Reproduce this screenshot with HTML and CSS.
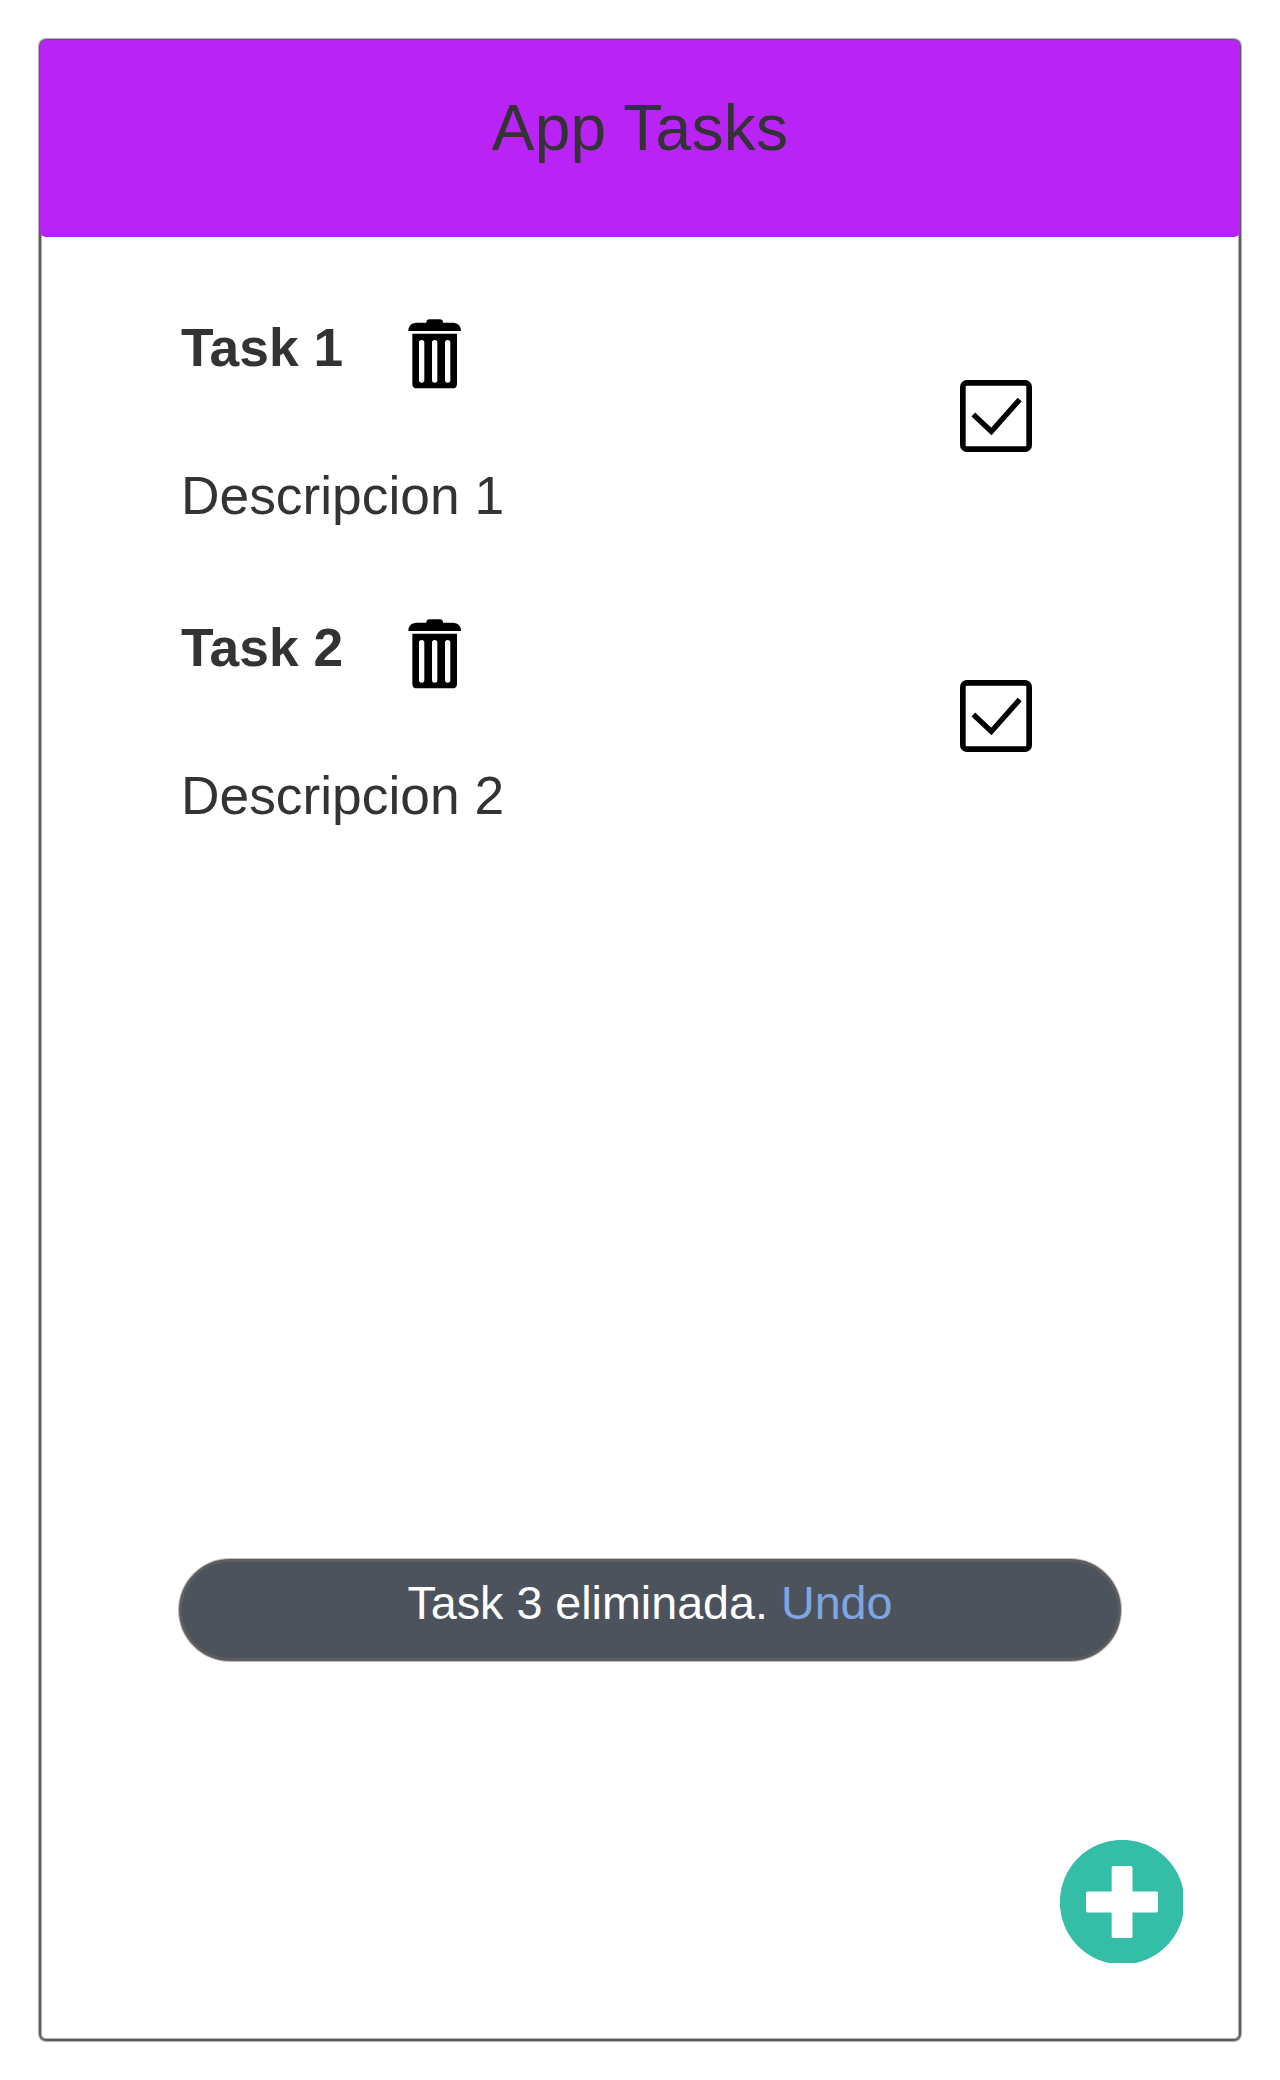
FILE: index.html
```html
<!DOCTYPE html>
<html lang="es">
<head>
<meta charset="utf-8">
<title>App Tasks</title>
<link rel="stylesheet" href="styles.css">
</head>
<body>
<svg class="symbols" aria-hidden="true">
  <symbol id="trash" viewBox="24 27 159 210">
    <path d="M25 63Q26 39 48 38H79Q79 28 89 28H119Q129 28 129 38H160Q182 39 183 63Z"/>
    <path fill-rule="evenodd" d="M37 71H171V221Q171 235 157 235H51Q37 235 37 221ZM57 98V210a8 8 0 0 0 16 0V98a8 8 0 0 0-16 0ZM96 98V210a8 8 0 0 0 16 0V98a8 8 0 0 0-16 0ZM135 98V210a8 8 0 0 0 16 0V98a8 8 0 0 0-16 0Z"/>
  </symbol>
  <symbol id="check" viewBox="30 30 216 216">
    <rect x="38.5" y="38.5" width="199" height="199" rx="12" fill="none" stroke="#000" stroke-width="17"/>
    <path d="M70 133.500L124 184.500L209 88.500" fill="none" stroke="#000" stroke-width="16"/>
  </symbol>
</svg>
<div class="app">
  <header class="header"><h1 class="app-title">App Tasks</h1></header>
  <main class="tasks">
    <article class="task">
      <div class="task-body">
        <div class="task-heading">
          <h2 class="task-title">Task 1</h2>
          <svg class="trash"><use href="#trash"/></svg>
        </div>
        <p class="task-description">Descripcion 1</p>
      </div>
      <svg class="check"><use href="#check"/></svg>
    </article>
    <article class="task">
      <div class="task-body">
        <div class="task-heading">
          <h2 class="task-title">Task 2</h2>
          <svg class="trash"><use href="#trash"/></svg>
        </div>
        <p class="task-description">Descripcion 2</p>
      </div>
      <svg class="check"><use href="#check"/></svg>
    </article>
  </main>
  <div class="snackbar">Task 3 eliminada. <span class="undo">Undo</span></div>
  <svg class="add" viewBox="30 30 369 369">
    <circle cx="216.500" cy="216.500" r="187" fill="#34bea7"/>
    <rect x="185" y="108" width="62.500" height="216" rx="5" fill="#fff"/>
    <rect x="108" y="184.500" width="216" height="63" rx="5" fill="#fff"/>
  </svg>
</div>
</body>
</html>
```
FILE: styles.css
```css
* {
  box-sizing: border-box;
}

body {
  margin: 0;
  padding: 39px;
  background: #fff;
  color: #333;
  font-family: "Liberation Sans", Arial, sans-serif;
}

h1, h2, p {
  margin: 0;
  font-weight: normal;
}

svg {
  display: block;
  flex: none;
}

.symbols {
  display: none;
}

.app {
  display: flex;
  flex-direction: column;
  height: 2002px;
  border: 2px solid #5e5e5e;
  border-radius: 7px;
  box-shadow: 0 0 0 1px rgba(94, 94, 94, 0.5), inset 0 0 0 1px rgba(94, 94, 94, 0.5);
}

.header {
  height: 197px;
  margin: -1px -1px 0;
  border-radius: 6px;
  background: #ba23f6;
}

.app-title {
  font-size: 64px;
  letter-spacing: 0.25px;
  line-height: 176px;
  text-align: center;
}

.tasks {
  height: 1322px;
  padding: 81px 207px 0 140px;
}

.task {
  display: flex;
  justify-content: space-between;
  height: 300px;
}

.task-heading {
  display: grid;
  grid-template-columns: 227px 53px;
  height: 71px;
}

.task-title,
.task-description {
  font-size: 53.33px;
  line-height: 60px;
  white-space: nowrap;
}

.task-title {
  font-weight: bold;
}

.task-description {
  margin-top: 77px;
}

.trash {
  width: 53px;
  height: 70px;
  margin-top: 1px;
}

.check {
  width: 72px;
  height: 72px;
  margin-top: 62px;
}

.snackbar {
  width: 942px;
  height: 102px;
  margin-left: 138px;
  border: 3px solid #5e5e5e;
  border-radius: 51px;
  background: #4c535d;
  box-shadow: 0 0 0 1px rgba(94, 94, 94, 0.4);
  color: #fff;
  font-size: 46.67px;
  line-height: 82px;
  text-align: center;
}

.undo {
  color: #7ea6e0;
}

.add {
  width: 123px;
  height: 123px;
  margin: 179px 56px 0 auto;
}
```
